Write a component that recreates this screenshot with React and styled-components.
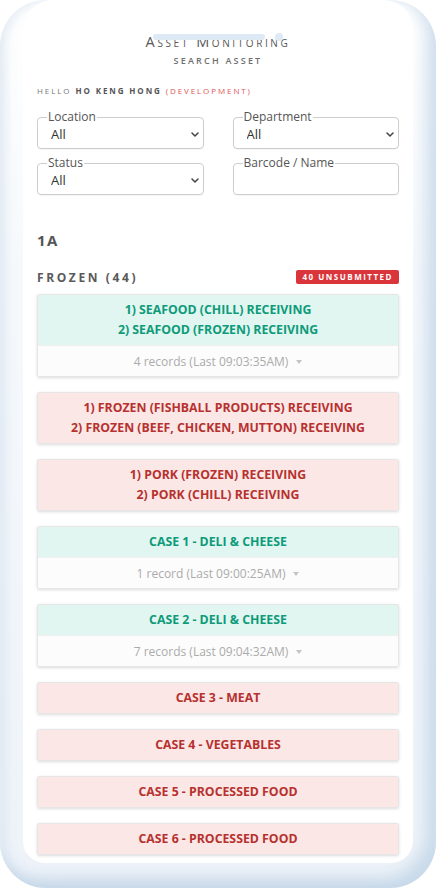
import React from "react";
import styled, { createGlobalStyle } from "styled-components";

const GlobalStyle = createGlobalStyle`
    html, body {
        margin: 0;
        padding: 0;
        background: #ffffff;
    }
    body {
        font-family: "Open Sans", "Noto Sans", sans-serif;
        -webkit-font-smoothing: antialiased;
    }
`;

const PhoneFrame = styled.div`
    position: relative;
    width: 436px;
    height: 888px;
    box-sizing: border-box;
    padding: 0 23px 25px;
    border-radius: 46px;
    background: linear-gradient(
        180deg,
        #ffffff 0%,
        #f6f9fc 30%,
        #eef3f9 100%
    );
    box-shadow: inset -10px -10px 16px rgba(170, 196, 222, 0.55),
        inset 6px 0 10px rgba(210, 224, 238, 0.5),
        inset 0 4px 6px rgba(255, 255, 255, 1);
    display: flex;
`;

const Screen = styled.div`
    flex: 1;
    background: #ffffff;
    border-radius: 30px 30px 22px 22px;
    padding: 33px 14px 0;
    display: flex;
    flex-direction: column;
`;

const Notch = styled.div`
    position: absolute;
    top: 34px;
    left: 153px;
    width: 112px;
    height: 6px;
    border-radius: 3px;
    background: #dde9f5;
    &::after {
        content: "";
        position: absolute;
        left: 122px;
        top: -1px;
        width: 8px;
        height: 8px;
        border-radius: 50%;
        background: #dde9f5;
    }
`;

const Title = styled.h1`
    margin: 0;
    text-align: center;
    font-family: "Open Sans", sans-serif;
    font-weight: 400;
    font-size: 14.5px;
    line-height: 18px;
    letter-spacing: 2.6px;
    font-variant: small-caps;
    color: #585858;
`;

const Subtitle = styled.h2`
    margin: 4px 0 0;
    text-align: center;
    font-size: 9px;
    line-height: 12px;
    font-weight: 600;
    letter-spacing: 2.2px;
    color: #6f6f6f;
`;

const Greeting = styled.div`
    margin-top: 19px;
    font-size: 8px;
    line-height: 10px;
    letter-spacing: 1.9px;
    color: #777777;
    b {
        color: #555555;
        font-weight: 700;
    }
    span {
        color: #e05555;
    }
`;

const FilterGrid = styled.div`
    margin-top: 14px;
    display: grid;
    grid-template-columns: 1fr 1fr;
    column-gap: 29px;
    row-gap: 7px;
`;

const Field = styled.fieldset`
    margin: 0;
    min-width: 0;
    padding: 0 4px 4px 13px;
    border: 1px solid #cdcdcd;
    border-radius: 4px;
    box-shadow: 0 1px 1px rgba(0, 0, 0, 0.04);
    legend {
        margin-left: -4px;
        padding: 0 1px;
        font-size: 12px;
        line-height: 14px;
        color: #555555;
    }
`;

const FieldRow = styled.div`
    display: flex;
    align-items: center;
    height: 20px;
`;

const Select = styled.select`
    flex: 1;
    min-width: 0;
    appearance: none;
    border: none;
    background: transparent;
    padding: 0;
    font-family: "Open Sans", sans-serif;
    font-size: 13px;
    color: #333333;
    outline: none;
`;

const TextInput = styled.input`
    flex: 1;
    min-width: 0;
    border: none;
    background: transparent;
    padding: 0;
    font-family: "Open Sans", sans-serif;
    font-size: 13px;
    outline: none;
`;

const LocationTitle = styled.div`
    margin-top: 35px;
    font-size: 15px;
    line-height: 20px;
    font-weight: 700;
    letter-spacing: 1.5px;
    color: #555555;
`;

const GroupHeader = styled.div`
    margin-top: 19px;
    display: flex;
    justify-content: space-between;
    align-items: center;
    height: 16px;
`;

const GroupName = styled.div`
    font-size: 12px;
    font-weight: 700;
    letter-spacing: 2.6px;
    color: #5a5a5a;
`;

const Badge = styled.div`
    background: #d9353b;
    color: #ffffff;
    font-size: 8px;
    line-height: 14px;
    font-weight: 700;
    letter-spacing: 1.5px;
    padding: 0 6px 0 7px;
    border-radius: 2px;
`;

const CardList = styled.div`
    margin-top: 9px;
    display: flex;
    flex-direction: column;
    gap: 15px;
`;

const Card = styled.div`
    border: 1px solid #e6e6e6;
    border-radius: 2px;
    box-shadow: 0 1px 3px rgba(0, 0, 0, 0.14);
    overflow: hidden;
`;

const CardHead = styled.div`
    padding: 5px 10px;
    text-align: center;
    font-size: 12.3px;
    line-height: 20px;
    font-weight: 700;
    background: ${(p) => (p.$done ? "#e1f5f1" : "#fae7e6")};
    color: ${(p) => (p.$done ? "#0d9b79" : "#b7312f")};
`;

const CardFoot = styled.div`
    height: 30px;
    display: flex;
    align-items: center;
    justify-content: center;
    gap: 8px;
    background: #fcfcfc;
    border-top: 1px solid #f0f0f0;
    font-size: 12px;
    color: #ababab;
`;

const Caret = styled.span`
    width: 0;
    height: 0;
    border-left: 3.5px solid transparent;
    border-right: 3.5px solid transparent;
    border-top: 4px solid #c4c4c4;
    margin-top: 1px;
`;

const Chevron = () => (
    <svg width="8" height="5" viewBox="0 0 8 5" fill="none">
        <path
            d="M1 1l3 3 3-3"
            stroke="#444"
            strokeWidth="1.5"
            strokeLinecap="round"
            strokeLinejoin="round"
        />
    </svg>
);

const cards = [
    {
        lines: ["1) SEAFOOD (CHILL) RECEIVING", "2) SEAFOOD (FROZEN) RECEIVING"],
        done: true,
        footer: "4 records (Last 09:03:35AM)",
    },
    {
        lines: [
            "1) FROZEN (FISHBALL PRODUCTS) RECEIVING",
            "2) FROZEN (BEEF, CHICKEN, MUTTON) RECEIVING",
        ],
    },
    { lines: ["1) PORK (FROZEN) RECEIVING", "2) PORK (CHILL) RECEIVING"] },
    {
        lines: ["CASE 1 - DELI & CHEESE"],
        done: true,
        footer: "1 record (Last 09:00:25AM)",
    },
    {
        lines: ["CASE 2 - DELI & CHEESE"],
        done: true,
        footer: "7 records (Last 09:04:32AM)",
    },
    { lines: ["CASE 3 - MEAT"] },
    { lines: ["CASE 4 - VEGETABLES"] },
    { lines: ["CASE 5 - PROCESSED FOOD"] },
    { lines: ["CASE 6 - PROCESSED FOOD"] },
];

function SelectField({ label }) {
    return (
        <Field>
            <legend>{label}</legend>
            <FieldRow>
                <Select defaultValue="All">
                    <option>All</option>
                </Select>
                <Chevron />
            </FieldRow>
        </Field>
    );
}

export default function App() {
    return (
        <>
            <GlobalStyle />
            <PhoneFrame>
                <Notch />
                <Screen>
                    <Title>Asset Monitoring</Title>
                    <Subtitle>SEARCH ASSET</Subtitle>
                    <Greeting>
                        HELLO <b>HO KENG HONG</b> <span>(DEVELOPMENT)</span>
                    </Greeting>
                    <FilterGrid>
                        <SelectField label="Location" />
                        <SelectField label="Department" />
                        <SelectField label="Status" />
                        <Field>
                            <legend>Barcode / Name</legend>
                            <FieldRow>
                                <TextInput type="text" />
                            </FieldRow>
                        </Field>
                    </FilterGrid>
                    <LocationTitle>1A</LocationTitle>
                    <GroupHeader>
                        <GroupName>FROZEN (44)</GroupName>
                        <Badge>40 UNSUBMITTED</Badge>
                    </GroupHeader>
                    <CardList>
                        {cards.map((card, i) => (
                            <Card key={i}>
                                <CardHead $done={card.done}>
                                    {card.lines.map((line) => (
                                        <div key={line}>{line}</div>
                                    ))}
                                </CardHead>
                                {card.footer && (
                                    <CardFoot>
                                        {card.footer}
                                        <Caret />
                                    </CardFoot>
                                )}
                            </Card>
                        ))}
                    </CardList>
                </Screen>
            </PhoneFrame>
        </>
    );
}
